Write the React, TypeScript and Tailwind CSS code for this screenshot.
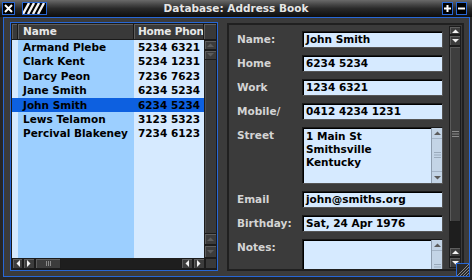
import React from "react";

type Dir = "up" | "down" | "left" | "right";

const BLUE = "border-[#2767d6]";

const Tri = ({ dir, dim = false }: { dir: Dir; dim?: boolean }) => {
  const v = dir === "up" || dir === "down";
  const pts =
    dir === "up"
      ? "0,4 3.5,0.5 7,4"
      : dir === "down"
      ? "0,0 3.5,3.5 7,0"
      : dir === "left"
      ? "4,0 0.5,3.5 4,7"
      : "0,0 3.5,3.5 0,7";
  return (
    <svg width={v ? 7 : 4} height={v ? 4 : 7} viewBox={v ? "0 0 7 4" : "0 0 4 7"}>
      <polygon points={pts} fill={dim ? "#5c5c5c" : "#f2f2f2"} />
    </svg>
  );
};

const Btn = ({ dir, dim, className = "" }: { dir: Dir; dim?: boolean; className?: string }) => (
  <div
    className={`shrink-0 flex items-center justify-center bg-[#3c3c3c] border border-[#1c1c1c] shadow-[inset_1px_1px_0_#5e5e5e] ${className}`}
  >
    <Tri dir={dir} dim={dim} />
  </div>
);

const GripV = ({ color = "#8a8a8a" }: { color?: string }) => (
  <svg width="7" height="6" viewBox="0 0 7 6">
    <rect x="0" y="0" width="7" height="1" fill={color} />
    <rect x="0" y="2.5" width="7" height="1" fill={color} />
    <rect x="0" y="5" width="7" height="1" fill={color} />
  </svg>
);

const HeadCell = ({ className = "", children }: { className?: string; children?: React.ReactNode }) => (
  <div
    className={`h-full bg-[#393939] border-r border-b border-[#1a1a1a] shadow-[inset_1px_1px_0_#5e5e5e] text-[#e8e8e8] flex items-center overflow-hidden whitespace-nowrap ${className}`}
  >
    {children}
  </div>
);

const rows = [
  ["Armand Plebe", "5234 6321"],
  ["Clark Kent", "5234 1231"],
  ["Darcy Peon", "7236 7623"],
  ["Jane Smith", "6234 5234"],
  ["John Smith", "6234 5234"],
  ["Lews Telamon", "3123 5323"],
  ["Percival Blakeney", "7234 6123"],
];
const SEL = 4;

const TitleBar = () => (
  <div className="h-[17px] shrink-0 grid grid-cols-[1fr_auto_1fr] items-center bg-linear-to-b from-[#6a6a6a] via-[#2a2a2a] to-[#0d0d0d]">
    <div className="flex items-center pl-[2px] gap-[7px]">
      <div className={`w-[13px] h-[13px] border ${BLUE} bg-black flex items-center justify-center`}>
        <svg width="9" height="9" viewBox="0 0 9 9">
          <path d="M1 1 L8 8 M8 1 L1 8" stroke="#fff" strokeWidth="2" />
        </svg>
      </div>
      <div className={`w-[25px] h-[13px] border ${BLUE} bg-black overflow-hidden`}>
        <svg width="23" height="11" viewBox="0 0 23 11">
          <path d="M0 11 L6 0 M5 11 L11 0 M10 11 L16 0 M15 11 L21 0" stroke="#f4f4f4" strokeWidth="2.4" />
        </svg>
      </div>
    </div>
    <div className="text-[#e6e6e6] whitespace-nowrap">Database: Address Book</div>
    <div className="flex justify-end items-center gap-[3px] pr-[5px]">
      <div className={`w-[11px] h-[13px] border ${BLUE} bg-black flex items-center justify-center`}>
        <svg width="7" height="7" viewBox="0 0 7 7">
          <path d="M0 3.5 H7 M3.5 0 V7" stroke="#fff" strokeWidth="2" />
        </svg>
      </div>
      <div className={`w-[11px] h-[13px] border ${BLUE} bg-black flex items-center justify-center`}>
        <svg width="7" height="7" viewBox="0 0 7 7">
          <path d="M0 3.5 H7" stroke="#fff" strokeWidth="2" />
        </svg>
      </div>
    </div>
  </div>
);

const LeftPanel = () => (
  <div className={`w-[208px] shrink-0 border ${BLUE} flex min-h-0`}>
    <div className="flex-1 flex flex-col border border-r-0 border-[#1a1a1a] min-h-0">
      <div className="flex-1 flex min-h-0">
        <div className="w-[192px] flex flex-col min-h-0">
          <div className="h-[16px] flex shrink-0">
            <HeadCell className="w-[6px]" />
            <HeadCell className="w-[116px] pl-[5px]">Name</HeadCell>
            <HeadCell className="w-[70px] pl-[4px] tracking-[-0.2px]">Home Phone</HeadCell>
          </div>
          {rows.map(([n, p], i) => (
            <div key={n} className={`h-[14.4px] shrink-0 flex text-black ${i === SEL ? "bg-[#0d60e0]" : ""}`}>
              <div className={`w-[6px] ${i === SEL ? "" : "bg-[#d6eaff]"}`} />
              <div className={`w-[116px] pl-[5px] flex items-center whitespace-nowrap ${i === SEL ? "" : "bg-[#9ccfff]"}`}>
                {n}
              </div>
              <div className={`w-[70px] pl-[4px] flex items-center whitespace-nowrap ${i === SEL ? "" : "bg-[#d6eaff]"}`}>
                {p}
              </div>
            </div>
          ))}
          <div className="flex-1 flex">
            <div className="w-[6px] bg-[#d6eaff]" />
            <div className="w-[116px] bg-[#9ccfff]" />
            <div className="w-[70px] bg-[#d6eaff]" />
          </div>
        </div>
        <div className="w-[13px] flex flex-col bg-[#3a3a3a] min-h-0">
          <div className="h-[16px] shrink-0 flex">
            <HeadCell className="w-full" />
          </div>
          <Btn dir="up" dim className="h-[10px]" />
          <Btn dir="down" dim className="h-[10px]" />
          <div className="flex-1 border-x border-[#1c1c1c] shadow-[inset_1px_0_0_#505050]" />
          <Btn dir="up" dim className="h-[12px]" />
          <Btn dir="down" dim className="h-[13px]" />
        </div>
      </div>
      <div className="h-[11px] shrink-0 flex bg-[#1c1c1c]">
        <Btn dir="left" className="w-[11px]" />
        <Btn dir="right" className="w-[12px]" />
        <div className="w-[26px] bg-[#3c3c3c] border border-[#1c1c1c] shadow-[inset_1px_1px_0_#5e5e5e] flex items-center justify-center">
          <svg width="5" height="5" viewBox="0 0 5 5">
            <rect x="0" y="0" width="1" height="5" fill="#8a8a8a" />
            <rect x="2" y="0" width="1" height="5" fill="#8a8a8a" />
            <rect x="4" y="0" width="1" height="5" fill="#8a8a8a" />
          </svg>
        </div>
        <div className="flex-1 bg-[#1e1e1e]" />
        <Btn dir="left" className="w-[12px]" />
        <Btn dir="right" className="w-[12px]" />
        <div className="w-[12px] bg-[#3a3a3a] border border-[#1c1c1c]" />
      </div>
    </div>
  </div>
);

const Input = ({ children }: { children: React.ReactNode }) => (
  <div className="w-[141px] h-[17px] bg-[#d6eaff] border border-[#1a1a1a] border-b-[#555] border-r-[#555] shadow-[inset_1px_1px_0_#000] pl-[3px] flex items-center text-black whitespace-nowrap overflow-hidden">
    {children}
  </div>
);

const InnerScroll = () => (
  <div className="w-[11px] flex flex-col bg-[#c3d4e6] border-l border-[#8d9cad]">
    <div className="h-[11px] shrink-0 flex items-center justify-center border-b border-[#a4b4c6]">
      <Tri dir="up" dim />
    </div>
    <div className="h-[33px] shrink-0 flex items-center justify-center border-b border-[#a4b4c6]">
      <GripV color="#9aaabb" />
    </div>
    <div className="flex-1 flex items-center justify-center">
      <Tri dir="down" dim />
    </div>
  </div>
);

const Area = ({ lines }: { lines: string[] }) => (
  <div className="w-[141px] h-[57px] shrink-0 bg-[#d6eaff] border border-[#1a1a1a] border-b-[#555] border-r-[#555] shadow-[inset_1px_1px_0_#000] flex text-black">
    <div className="flex-1 pl-[3px] pt-[2px] leading-[12.75px] whitespace-nowrap">
      {lines.map((l) => (
        <div key={l}>{l}</div>
      ))}
    </div>
    <InnerScroll />
  </div>
);

const Row = ({ label, children }: { label: string; children: React.ReactNode }) => (
  <div className="flex shrink-0">
    <div className="w-[65px] h-[17px] flex items-center text-[#d4d4d4] whitespace-nowrap overflow-hidden">{label}</div>
    {children}
  </div>
);

const RightPanel = () => (
  <div className="w-[237px] shrink-0 mt-[1px] border-2 border-[#202020] flex min-h-0 overflow-hidden">
    <div className="flex-1 flex flex-col gap-[7px] pl-[8px] pt-[6px] overflow-hidden min-h-0">
      <Row label="Name:">
        <Input>John Smith</Input>
      </Row>
      <Row label="Home">
        <Input>6234 5234</Input>
      </Row>
      <Row label="Work">
        <Input>1234 6321</Input>
      </Row>
      <Row label="Mobile/">
        <Input>0412 4234 1231</Input>
      </Row>
      <Row label="Street">
        <Area lines={["1 Main St", "Smithsville", "Kentucky"]} />
      </Row>
      <Row label="Email">
        <Input>john@smiths.org</Input>
      </Row>
      <Row label="Birthday:">
        <Input>Sat, 24 Apr 1976</Input>
      </Row>
      <Row label="Notes:">
        <Area lines={[]} />
      </Row>
    </div>
    <div className="w-[12px] mr-[1px] ml-[6px] flex flex-col py-[1px] min-h-0">
      <Btn dir="up" className="h-[9px]" />
      <Btn dir="down" className="h-[11px]" />
      <div className="flex-1 min-h-0 bg-[#3e3e3e] border border-[#1c1c1c] shadow-[inset_1px_1px_0_#5a5a5a] flex items-center justify-center">
        <GripV />
      </div>
      <div className="h-[25px] shrink-0 bg-[#1e1e1e]" />
      <Btn dir="up" className="h-[10px]" />
      <Btn dir="down" className="h-[11px]" />
    </div>
  </div>
);

export default function App() {
  return (
    <div className="w-[472px] h-[280px] bg-[#262626] flex flex-col overflow-hidden font-['DejaVu_Sans',Verdana,sans-serif] font-bold text-[10.5px] leading-none select-none">
      <TitleBar />
      <div
        className={`relative flex-1 min-h-0 ml-[3px] mr-[2px] mb-[3px] border ${BLUE} bg-[#3b3b3b] flex pt-[4px] pl-[6px] pr-[5px] pb-[5px] gap-[9px]`}
      >
        <LeftPanel />
        <RightPanel />
        <div className={`absolute right-0 bottom-0 w-[13px] h-[13px] border-t border-l ${BLUE} bg-[#2a2a2a] overflow-hidden`}>
          <svg width="12" height="12" viewBox="0 0 12 12">
            <path d="M3 12 L12 3 M6 12 L12 6 M9 12 L12 9 M0 12 L12 0" stroke="#8a8a8a" strokeWidth="1" />
          </svg>
        </div>
      </div>
    </div>
  );
}
